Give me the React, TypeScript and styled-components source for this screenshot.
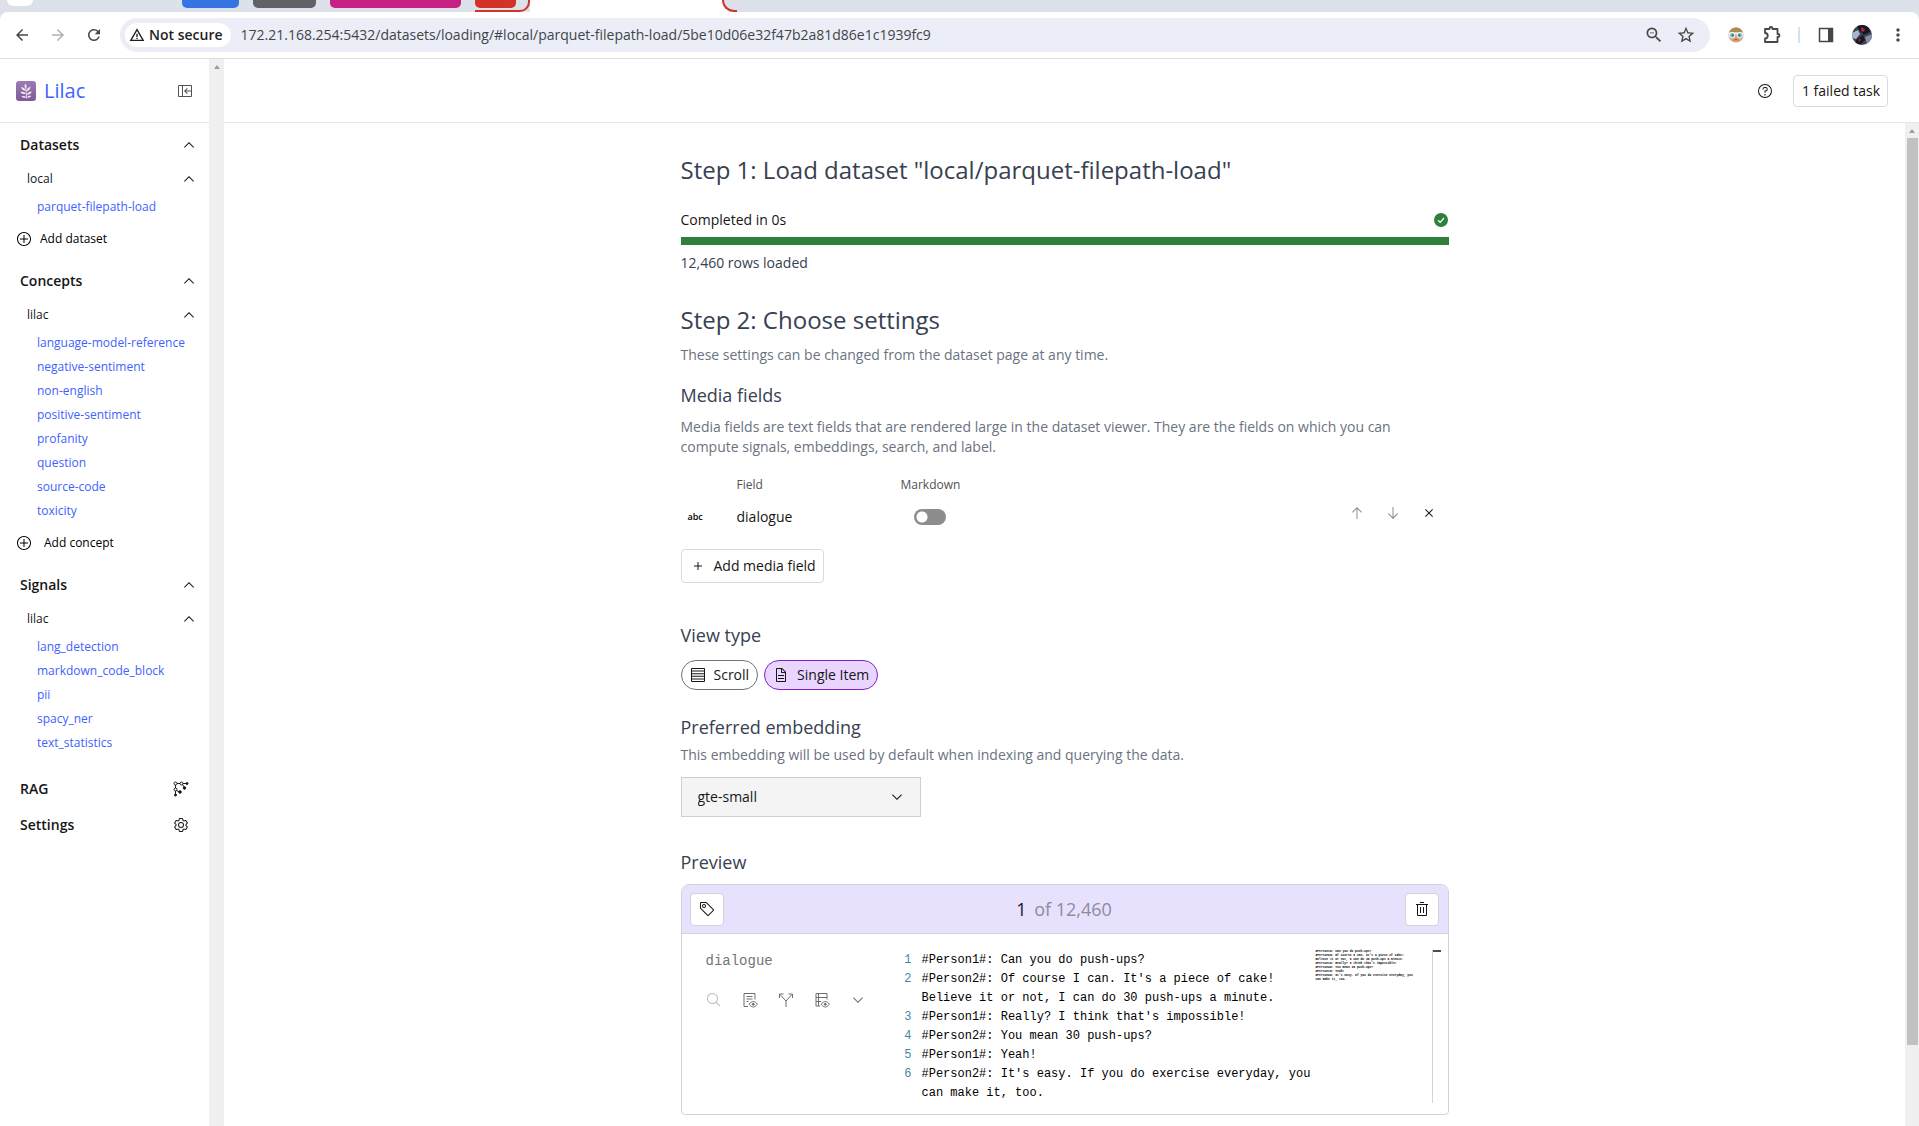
import React from "react";
import styled, { createGlobalStyle } from "styled-components";
import {
  MdArrowBack,
  MdArrowForward,
  MdRefresh,
  MdWarningAmber,
  MdZoomOut,
  MdStarBorder,
  MdOutlineExtension,
  MdMoreVert,
} from "react-icons/md";

const SANS = `"Open Sans", "Noto Sans", sans-serif`;
const MONO = `"Liberation Mono", "DejaVu Sans Mono", monospace`;

const GlobalStyle = createGlobalStyle`
  *, *::before, *::after { box-sizing: border-box; }
  body { margin: 0; background: #fff; color: #161616; font-family: ${SANS}; font-size: 14px; line-height: 20px; overflow: hidden; }
  button, input, select { font: inherit; color: inherit; }
  button { background: none; border: 0; padding: 0; display: inline-flex; align-items: center; justify-content: center; cursor: pointer; }
  h1, h2, h3, p, ul, ol { margin: 0; padding: 0; font-weight: 400; list-style: none; }
  a { text-decoration: none; }
  svg { display: block; flex: none; }
`;

/* ---------- icons ---------- */

const PATHS = {
  chevronUp: "M16 10L26 20 24.6 21.4 16 12.8 7.4 21.4 6 20z",
  chevronDown: "M16 22L6 12 7.4 10.6 16 19.2 24.6 10.6 26 12z",
  addAlt:
    "M16 4c6.6 0 12 5.4 12 12s-5.4 12-12 12S4 22.6 4 16 9.4 4 16 4M16 2C8.3 2 2 8.3 2 16s6.3 14 14 14 14-6.3 14-14S23.7 2 16 2z M24 15L17 15 17 8 15 8 15 15 8 15 8 17 15 17 15 24 17 24 17 17 24 17z",
  add: "M17 15L17 8 15 8 15 15 8 15 8 17 15 17 15 24 17 24 17 17 24 17 24 15z",
  help: "M16,2A14,14,0,1,0,30,16,14,14,0,0,0,16,2Zm0,26A12,12,0,1,1,28,16,12,12,0,0,1,16,28Z M14.5 23.5a1.5 1.5 0 1 0 3 0a1.5 1.5 0 1 0 -3 0z M17,8H15.5A4.49,4.49,0,0,0,11,12.5V13h2v-.5A2.5,2.5,0,0,1,15.5,10H17a2.5,2.5,0,0,1,0,5H15v4.5h2V17a4.5,4.5,0,0,0,0-9Z",
  panelClose:
    "M28,4H4A2,2,0,0,0,2,6V26a2,2,0,0,0,2,2H28a2,2,0,0,0,2-2V6A2,2,0,0,0,28,4ZM10,26H4V6h6Zm18-11H17.8l3.6-3.6L20,10l-6,6,6,6,1.4-1.4L17.8,17H28v9H12V6H28Z",
  document:
    "M25.7,9.3l-7-7C18.5,2.1,18.3,2,18,2H8C6.9,2,6,2.9,6,4v24c0,1.1,0.9,2,2,2h16c1.1,0,2-0.9,2-2V10C26,9.7,25.9,9.5,25.7,9.3z M18,4.4l5.6,5.6H18V4.4z M24,28H8V4h8v6c0,1.1,0.9,2,2,2h6V28z M10 22H22V24H10z M10 16H22V18H10z",
  trash:
    "M12 12H14V24H12z M18 12H20V24H18z M4 6V8H6V28a2 2 0 0 0 2 2H24a2 2 0 0 0 2-2V8h2V6zM8 28V8H24V28z M12 2H20V4H12z",
  tag: "M10,14a4,4,0,1,1,4-4A4,4,0,0,1,10,14Zm0-6a2,2,0,1,0,2,2A2,2,0,0,0,10,8Z M16.6436,29.4141,2.5859,15.3555A2,2,0,0,1,2,13.9414V4A2,2,0,0,1,4,2h9.9414a2,2,0,0,1,1.4141.5859L29.4141,16.6436a2.0005,2.0005,0,0,1,0,2.8285l-9.9414,9.942a2.0008,2.0008,0,0,1-2.8285,0ZM4,4v9.9417L18.0579,28,28,18.0579,13.9416,4Z",
  search:
    "M29,27.5859l-7.5521-7.5521a11.0177,11.0177,0,1,0-1.4141,1.4141L27.5859,29ZM4,13a9,9,0,1,1,9,9A9.01,9.01,0,0,1,4,13Z",
  arrowUp:
    "M16 4L6 14 7.41 15.41 15 7.83 15 28 17 28 17 7.83 24.59 15.41 26 14z",
  arrowDown:
    "M16 28L6 18 7.41 16.59 15 24.17 15 4 17 4 17 24.17 24.59 16.59 26 18z",
  close:
    "M24 9.4L22.6 8 16 14.6 9.4 8 8 9.4 14.6 16 8 22.6 9.4 24 16 17.4 22.6 24 24 22.6 17.4 16z",
  gear: "M27,16.76c0-.25,0-.5,0-.76s0-.51,0-.77l1.92-1.68A2,2,0,0,0,29.3,11L26.94,7a2,2,0,0,0-1.73-1,2,2,0,0,0-.64.1l-2.43.82a11.35,11.35,0,0,0-1.31-.75l-.51-2.52a2,2,0,0,0-2-1.61H13.64a2,2,0,0,0-2,1.61l-.51,2.52a11.48,11.48,0,0,0-1.32.75L7.43,6.06A2,2,0,0,0,6.79,6,2,2,0,0,0,5.06,7L2.7,11a2,2,0,0,0,.41,2.51L5,15.24c0,.25,0,.5,0,.76s0,.51,0,.77L3.11,18.45A2,2,0,0,0,2.7,21L5.06,25a2,2,0,0,0,1.73,1,2,2,0,0,0,.64-.1l2.43-.82a11.35,11.35,0,0,0,1.31.75l.51,2.52a2,2,0,0,0,2,1.61h4.72a2,2,0,0,0,2-1.61l.51-2.52a11.48,11.48,0,0,0,1.32-.75l2.42.82a2,2,0,0,0,.64.1,2,2,0,0,0,1.73-1L29.3,21a2,2,0,0,0-.41-2.51ZM25.21,24l-3.43-1.16a8.86,8.86,0,0,1-2.71,1.57L18.36,28H13.64l-.71-3.55a9.36,9.36,0,0,1-2.7-1.57L6.79,24,4.43,20l2.72-2.4a8.9,8.9,0,0,1,0-3.13L4.43,12,6.79,8l3.43,1.16a8.86,8.86,0,0,1,2.71-1.57L13.64,4h4.72l.71,3.55a9.36,9.36,0,0,1,2.7,1.57L25.21,8,27.57,12l-2.72,2.4a8.9,8.9,0,0,1,0,3.13L27.57,20Z M16,22a6,6,0,1,1,6-6A5.94,5.94,0,0,1,16,22Zm0-10a3.91,3.91,0,0,0-4,4,3.91,3.91,0,0,0,4,4,3.91,3.91,0,0,0,4-4A3.91,3.91,0,0,0,16,12Z",
};

function Icon({ name, size = 16 }: { name: keyof typeof PATHS; size?: number }) {
  return (
    <svg width={size} height={size} viewBox="0 0 32 32" fill="currentColor" aria-hidden="true">
      <path d={PATHS[name]} />
    </svg>
  );
}

function LineIcon({ children }: { children: React.ReactNode }) {
  return (
    <svg width="16" height="16" viewBox="0 0 32 32" fill="none" stroke="currentColor" strokeWidth="2" aria-hidden="true">
      {children}
    </svg>
  );
}

const RowsIcon = () => (
  <LineIcon>
    <path d="M3 3H29V29H3zM4 8H28M4 13.500H28M4 18.500H28M4 24H28" />
  </LineIcon>
);

const GraphIcon = () => (
  <LineIcon>
    <circle cx="5" cy="5" r="3" />
    <circle cx="17" cy="5" r="3" />
    <circle cx="5" cy="17" r="3" />
    <path d="M8 5H14M20 5H26M5 8V14M5 20V26M19 7L23 13M7 19L13 22" />
    <g fill="currentColor">
      <circle cx="28" cy="5" r="2" />
      <circle cx="23" cy="14" r="2.500" />
      <circle cx="14" cy="22" r="2.500" />
      <circle cx="5" cy="28" r="2" />
    </g>
  </LineIcon>
);

const EyeMark = () => (
  <>
    <path d="M14.500 24.500C17 20.500 20 19 22.500 19S28 20.500 30.500 24.500C28 28.500 25 30 22.500 30S17 28.500 14.500 24.500z" />
    <circle cx="22.500" cy="24.500" r="2" fill="currentColor" />
  </>
);

const DocViewIcon = () => (
  <LineIcon>
    <path d="M12 29H4V3H26V15M9 9H21M9 14H21M9 19H13" />
    <EyeMark />
  </LineIcon>
);

const TableViewIcon = () => (
  <LineIcon>
    <path d="M12 28H4V3H26V15M4 11H26M4 19H14M9 3V28" />
    <EyeMark />
  </LineIcon>
);

const SplitIcon = () => (
  <LineIcon>
    <path d="M16 30V18L4 5M16 18L28 5M3 12V4H11M21 4H29V12" />
  </LineIcon>
);

const CheckIcon = () => (
  <svg width="16" height="16" viewBox="0 0 16 16" aria-hidden="true">
    <circle cx="8" cy="8" r="7" fill="#2f7f3d" />
    <path d="M5 8.300L7.200 10.400L11 6" fill="none" stroke="#fff" strokeWidth="1.200" />
  </svg>
);

const LilacLogo = () => (
  <svg width="20" height="20" viewBox="0 0 20 20" aria-hidden="true">
    <defs>
      <linearGradient id="lilacGrad" x1="0" y1="0" x2="0" y2="1">
        <stop offset="0" stopColor="#9c7bb4" />
        <stop offset="1" stopColor="#805b96" />
      </linearGradient>
    </defs>
    <rect width="20" height="20" rx="3" fill="url(#lilacGrad)" />
    <path d="M10.500 17.500L10 7" stroke="#e9dff0" strokeWidth="1" fill="none" />
    <g fill="#f1e9f6">
      <path d="M9.300 2.500C8 4.500 8.300 6.500 10 7.800C11 6 10.800 4 9.300 2.500z" />
      <path d="M5 6C5.400 8.300 7.200 9.600 9.800 9.800C9.200 7.600 7.700 6.300 5 6z" />
      <path d="M14.500 5.500C12.400 6.200 11 8 10.700 10.300C13 9.800 14.400 8.200 14.500 5.500z" />
      <path d="M4.500 11C5.500 12.800 7.300 13.400 9.800 12.800C8.800 11 7 10.400 4.500 11z" />
      <path d="M15.800 10.500C13.500 10.500 11.700 11.600 10.800 13.600C13 13.900 14.900 12.900 15.800 10.500z" />
      <path d="M5.500 15.500C7 17 8.600 17.200 10 16.300C9 15 7.500 14.700 5.500 15.500z" />
      <path d="M15.200 15C13.500 14.400 12 14.900 10.900 16.300C12.500 17 14.100 16.600 15.200 15z" />
    </g>
  </svg>
);

const FaceIcon = () => (
  <svg width="16" height="16" viewBox="0 0 16 16" aria-hidden="true">
    <circle cx="8" cy="8" r="7.500" fill="#dba27c" />
    <path d="M1 6C2 2 5 .5 8 .5S14 2 15 6L11 5L5 5z" fill="#a98d55" />
    <rect x="0.500" y="5.500" width="15" height="1.500" fill="#eef4f6" />
    <circle cx="4.200" cy="8.200" r="2.800" fill="#8fc4cd" stroke="#eef4f6" />
    <circle cx="11.800" cy="8.200" r="2.800" fill="#8fc4cd" stroke="#eef4f6" />
    <circle cx="4.600" cy="8.200" r="1.200" fill="#3c8491" />
    <circle cx="11.400" cy="8.200" r="1.200" fill="#3c8491" />
    <path d="M6 13.500C7 12 9 12 10 13.500" stroke="#b5573c" fill="none" />
  </svg>
);

const PuzzleIcon = () => (
  <svg width="20" height="20" viewBox="0 0 20 20" aria-hidden="true">
    <path
      d="M3 4H7.500V3.500A1.500 1.500 0 0 1 10.500 3.500V4H15.500V9H16A1.500 1.500 0 0 1 16 12H15.500V17H3V13.500A2.500 2.500 0 0 0 3 8z"
      fill="none"
      stroke="#474747"
      strokeWidth="1.800"
      strokeLinejoin="round"
    />
  </svg>
);

const SidePanelIcon = () => (
  <svg width="16" height="16" viewBox="0 0 16 16" aria-hidden="true">
    <rect x="1.500" y="1.500" width="13" height="13" fill="none" stroke="#474747" strokeWidth="1.500" />
    <rect x="10" y="1" width="5" height="14" fill="#474747" />
  </svg>
);

const AvatarIcon = () => (
  <svg width="20" height="20" viewBox="0 0 20 20" aria-hidden="true">
    <defs>
      <clipPath id="avatarClip">
        <circle cx="10" cy="10" r="10" />
      </clipPath>
    </defs>
    <g clipPath="url(#avatarClip)">
      <rect width="20" height="20" fill="#3d4457" />
      <path d="M0 8L6 5L8 9L4 14L0 13z" fill="#a9b6c9" />
      <path d="M13 12L20 9V16L15 19z" fill="#8590a6" />
      <path d="M4 0H16L18 7L12 10L8 6z" fill="#15161f" />
      <path d="M9 2L13 4L12 7L9 6z" fill="#a3293a" />
      <path d="M5 14L11 10L13 15L8 20L3 18z" fill="#171821" />
      <path d="M6 15L8 13L9 15L7 17z" fill="#8c2636" />
    </g>
  </svg>
);

/* ---------- browser chrome ---------- */

const Page = styled.div`
  display: flex;
  flex-direction: column;
  height: 100vh;
`;

const TabStrip = styled.div`
  display: flex;
  align-items: flex-start;
  flex: none;
  height: 12px;
  padding-left: 7px;
  background: #dde1e9;
  overflow: hidden;
`;

const TabBlob = styled.div`
  width: 26px;
  height: 6px;
  margin-right: 149px;
  border-radius: 0 0 10px 10px;
  background: #fff;
`;

const TabGroup = styled.div<{ $color: string; $width: number }>`
  width: ${(p) => p.$width}px;
  height: 8px;
  margin-right: 14px;
  border-radius: 0 0 5px 5px;
  background: ${(p) => p.$color};
`;

const RedGroup = styled.div`
  width: 55px;
  height: 12px;
  padding-right: 12px;
  border: solid #d33228;
  border-width: 0 2px 2px 0;
  border-radius: 0 0 10px 0;
  background: #dde1e9;
`;

const RedPill = styled.div`
  height: 8px;
  border-radius: 0 0 5px 5px;
  background: #d33228;
`;

const ActiveTab = styled.div`
  display: flex;
  width: 207px;
  height: 12px;
  background: #fff;
`;

const ActiveTabEdge = styled.div`
  width: 15px;
  height: 12px;
  margin-left: auto;
  border: solid #d33228;
  border-width: 0 0 2px 2px;
  border-radius: 0 0 0 12px;
  background: #dde1e9;
`;

const Toolbar = styled.header`
  flex: none;
  background: #dde1e9;
`;

const ToolbarInner = styled.div`
  display: flex;
  align-items: center;
  height: 47px;
  padding: 0 11px 0 12px;
  border-bottom: 1px solid #dcdee1;
  border-radius: 8px 8px 0 0;
  background: #fff;
  color: #474747;
`;

const NavButtons = styled.div`
  display: flex;
  gap: 16px;
  margin-right: 16px;
`;

const ChromeButton = styled.button<{ $dim?: boolean }>`
  width: 20px;
  height: 20px;
  color: ${(p) => (p.$dim ? "#b0b0b0" : "#474747")};
`;

const UrlBar = styled.div`
  display: flex;
  align-items: center;
  flex: 1;
  height: 34px;
  padding: 0 14px 0 5px;
  border-radius: 17px;
  background: #ebeef7;
`;

const SecurityChip = styled.button`
  height: 24px;
  padding: 0 8px 0 4px;
  gap: 4px;
  border-radius: 12px;
  background: #fff;
  color: #1f1f1f;
  font-size: 14px;
  font-weight: 600;
  white-space: nowrap;
`;

const UrlInput = styled.input`
  flex: 1;
  min-width: 0;
  margin-left: 10px;
  padding: 0;
  border: 0;
  background: none;
  outline: none;
  color: #424448;
  font-size: 14px;
`;

const UrlActions = styled.div`
  display: flex;
  gap: 12px;
`;

const Extensions = styled.div`
  display: flex;
  align-items: center;
  gap: 16px;
  margin-left: 16px;
`;

const ExtDivider = styled.span`
  width: 2px;
  height: 16px;
  background: #d3e0fb;
`;

/* ---------- app shell ---------- */

const Shell = styled.div`
  display: flex;
  flex: 1;
  min-height: 0;
`;

const Sidebar = styled.nav`
  flex: none;
  width: 209px;
`;

const BrandRow = styled.div`
  display: flex;
  align-items: center;
  height: 64px;
  padding: 0 16px;
  border-bottom: 1px solid #e5e7eb;
`;

const Brand = styled.a`
  display: flex;
  align-items: center;
  gap: 8px;
  color: #4062fe;
  font-size: 20px;
  line-height: 28px;
`;

const CollapseButton = styled.button`
  margin-left: auto;
  color: #525252;
`;

const NavSections = styled.div`
  padding-top: 4px;
`;

const NavSection = styled.section`
  padding-bottom: 4px;
`;

const SectionHead = styled.button`
  width: 100%;
  height: 36px;
  padding: 0 12px 0 20px;
  justify-content: space-between;
  font-weight: 600;
`;

const GroupHead = styled.button`
  width: 100%;
  height: 32px;
  padding: 0 12px 0 27px;
  justify-content: space-between;
  font-size: 12px;
`;

const NavLink = styled.a`
  display: flex;
  align-items: center;
  height: 24px;
  padding-left: 37px;
  color: #4062fe;
  font-size: 12px;
  white-space: nowrap;
`;

const AddButton = styled.button<{ $gap: number }>`
  height: 40px;
  padding-left: 16px;
  gap: ${(p) => p.$gap}px;
  font-size: 12px;
  color: #000;
`;

const PlainLinks = styled.div`
  padding-top: 12px;
`;

const PlainLink = styled.a`
  display: flex;
  align-items: center;
  justify-content: space-between;
  height: 36px;
  padding: 0 20px;
  color: #161616;
  font-weight: 600;
`;

const ScrollTrack = styled.div<{ $width: number }>`
  display: flex;
  flex: none;
  flex-direction: column;
  align-items: center;
  width: ${(p) => p.$width}px;
  padding-top: 6px;
  background: #f0f0f0;
`;

const ScrollArrow = styled.span`
  width: 0;
  border: solid transparent;
  border-width: 0 3px 4px;
  border-bottom-color: #9c9c9c;
`;

const ScrollThumb = styled.span`
  width: 11px;
  height: 91%;
  margin-top: 5px;
  background: #c1c1c1;
`;

const Content = styled.div`
  display: flex;
  flex: 1;
  flex-direction: column;
  min-width: 0;
`;

const TopBar = styled.div`
  display: flex;
  flex: none;
  align-items: center;
  justify-content: flex-end;
  gap: 20px;
  height: 64px;
  padding-right: 31px;
  border-bottom: 1px solid #e5e7eb;
`;

const OutlineButton = styled.button<{ $height: number; $gap?: number }>`
  height: ${(p) => p.$height}px;
  padding: 0 7px 0 8px;
  gap: ${(p) => p.$gap ?? 0}px;
  border: 1px solid #d8dadf;
  border-radius: 4px;
  background: #fff;
  white-space: nowrap;
`;

const ScrollArea = styled.div`
  display: flex;
  flex: 1;
  min-height: 0;
`;

const Main = styled.main`
  flex: 1;
  min-width: 0;
  overflow: hidden;
`;

const Column = styled.div`
  width: 100%;
  max-width: 768px;
  margin: 0 auto;
  padding: 31px 0 10px;
`;

/* ---------- dataset loading ---------- */

const StepTitle = styled.h1`
  color: #374151;
  font-size: 24px;
  line-height: 32px;
`;

const FieldTitle = styled.h3`
  color: #374151;
  font-size: 18px;
  line-height: 28px;
`;

const Hint = styled.p`
  color: #6b7280;
`;

const Progress = styled.section`
  padding: 24px 0 31px;
`;

const ProgressHead = styled.div`
  display: flex;
  align-items: center;
  justify-content: space-between;
`;

const ProgressBar = styled.div`
  height: 8px;
  margin: 7px 0 8px;
  background: #2f7f3d;
`;

const ProgressNote = styled.p`
  color: #374151;
`;

const Setting = styled.section<{ $top: number; $gap: number }>`
  display: flex;
  flex-direction: column;
  align-items: stretch;
  gap: ${(p) => p.$gap}px;
  margin-top: ${(p) => p.$top}px;
`;

const MediaGrid = styled.div`
  display: grid;
  grid-template-columns: 49px 164px 74px 1fr;
  align-items: center;
  row-gap: 8px;
  margin: 12px 0 8px;
  padding-left: 7px;
`;

const ColumnLabel = styled.span`
  color: #525252;
  font-size: 12px;
  line-height: 16px;
`;

const SwitchLabel = styled.label`
  grid-column: 3 / 5;
  color: #525252;
  font-size: 12px;
  line-height: 16px;
`;

const FieldLabel = styled(ColumnLabel)`
  grid-column: 2;
`;

const TypeBadge = styled.span`
  color: #000;
  font-size: 9px;
  line-height: 32px;
  font-weight: 600;
`;

const FieldName = styled.span`
  line-height: 32px;
`;

const Switch = styled.input`
  appearance: none;
  width: 32px;
  height: 16px;
  margin: 0 0 0 13px;
  border-radius: 8px;
  background: radial-gradient(circle at 8px 8px, #fff 5px, #8d8d8d 6px);
`;

const RowActions = styled.div`
  display: flex;
  align-self: start;
  justify-content: flex-end;
  gap: 12px;
  padding-right: 8px;
`;

const RowAction = styled.button<{ $dim?: boolean }>`
  width: 24px;
  height: 24px;
  color: ${(p) => (p.$dim ? "#8d8d8d" : "#161616")};
`;

const PillRow = styled.div`
  display: flex;
  gap: 6px;
`;

const Pill = styled.button<{ $on?: boolean }>`
  height: 30px;
  padding: 0 8px;
  gap: 8px;
  border: 1px solid ${(p) => (p.$on ? "#7e22ce" : "#6b7280")};
  border-radius: 15px;
  background: ${(p) => (p.$on ? "#e9d5ff" : "#fff")};
`;

const EmbeddingHead = styled.div`
  display: grid;
  gap: 4px;
`;

const SelectBox = styled.div`
  display: grid;
  align-items: center;
  width: 240px;

  > * { grid-area: 1 / 1; }
  > svg { justify-self: end; margin-right: 16px; pointer-events: none; }
`;

const Select = styled.select`
  appearance: none;
  width: 100%;
  height: 40px;
  padding: 0 40px 0 16px;
  border: 1px solid #cdcfd3;
  border-radius: 0;
  background: #f4f4f4;
`;

const Card = styled.div`
  border: 1px solid #d1d3d8;
  border-radius: 8px 8px 4px 4px;
  overflow: hidden;
`;

const CardHead = styled.div`
  display: flex;
  align-items: center;
  justify-content: space-between;
  height: 49px;
  padding: 0 9px 0 8px;
  border-bottom: 1px solid #d1d3d8;
  background: #e7e1fe;
`;

const Counter = styled.p`
  color: #8b8c9c;
  font-size: 18px;
  line-height: 28px;

  > b { margin-right: 3px; color: #161616; font-weight: 400; }
`;

const SquareButton = styled.button`
  width: 34px;
  height: 33px;
  border: 1px solid #d1d3d8;
  border-radius: 4px;
  background: #fff;
`;

const CardBody = styled.div`
  display: flex;
  padding: 16px 7px 11px 24px;
`;

const FieldPanel = styled.div`
  width: 192px;
  padding-top: 1px;
  color: #757575;
  font-family: ${MONO};
`;

const FieldTools = styled.div`
  display: flex;
  gap: 12px;
  margin-top: 17px;
  margin-left: -4px;
`;

const ToolButton = styled.button<{ $faint?: boolean }>`
  width: 24px;
  height: 24px;
  color: ${(p) => (p.$faint ? "#bdbdbd" : "#6f6f6f")};
`;

const CodeLines = styled.ol`
  flex: 1;
  min-width: 0;
  padding-top: 1px;
  font-family: ${MONO};
  font-size: 12px;
  line-height: 19px;
  color: #000;
`;

const CodeLine = styled.li`
  display: grid;
  grid-template-columns: 14px 1fr;
  column-gap: 10px;
`;

const LineNumber = styled.span`
  color: #3f87a1;
  text-align: right;
`;

const Minimap = styled.div`
  flex: none;
  width: 117px;
  font-family: ${MONO};
  font-size: 3px;
  font-weight: 700;
  line-height: 4px;
  color: #000;
  border-right: 1px solid #d4d4d4;
  white-space: pre;
`;

const RulerMark = styled.span`
  width: 8px;
  height: 2px;
  background: #4d4d4d;
`;

const CONCEPTS = [
  "language-model-reference",
  "negative-sentiment",
  "non-english",
  "positive-sentiment",
  "profanity",
  "question",
  "source-code",
  "toxicity",
];

const SIGNALS = ["lang_detection", "markdown_code_block", "pii", "spacy_ner", "text_statistics"];

const DIALOGUE = [
  "#Person1#: Can you do push-ups?",
  "#Person2#: Of course I can. It's a piece of cake! Believe it or not, I can do 30 push-ups a minute.",
  "#Person1#: Really? I think that's impossible!",
  "#Person2#: You mean 30 push-ups?",
  "#Person1#: Yeah!",
  "#Person2#: It's easy. If you do exercise everyday, you can make it, too.",
];

const MINIMAP = DIALOGUE.join("\n")
  .replace("cake! Believe", "cake!\nBelieve")
  .replace("you can make", "you\ncan make");

function SidebarSection(props: {
  title: string;
  group: string;
  items: string[];
  children?: React.ReactNode;
}) {
  return (
    <NavSection>
      <SectionHead>
        {props.title}
        <Icon name="chevronUp" />
      </SectionHead>
      <GroupHead>
        {props.group}
        <Icon name="chevronUp" />
      </GroupHead>
      {props.items.map((item) => (
        <NavLink key={item} href={`#${item}`}>
          {item}
        </NavLink>
      ))}
      {props.children}
    </NavSection>
  );
}

function BrowserChrome() {
  return (
    <>
      <TabStrip>
        <TabBlob />
        <TabGroup $color="#3574e3" $width={57} />
        <TabGroup $color="#5f6368" $width={63} />
        <TabGroup $color="#c81f83" $width={131} />
        <RedGroup>
          <RedPill />
        </RedGroup>
        <ActiveTab>
          <ActiveTabEdge />
        </ActiveTab>
      </TabStrip>
      <Toolbar>
        <ToolbarInner>
          <NavButtons>
            <ChromeButton aria-label="Back">
              <MdArrowBack size={18} />
            </ChromeButton>
            <ChromeButton aria-label="Forward" $dim>
              <MdArrowForward size={18} />
            </ChromeButton>
            <ChromeButton aria-label="Reload">
              <MdRefresh size={18} />
            </ChromeButton>
          </NavButtons>
          <UrlBar>
            <SecurityChip>
              <MdWarningAmber size={16} />
              Not secure
            </SecurityChip>
            <UrlInput
              aria-label="Address"
              defaultValue="172.21.168.254:5432/datasets/loading/#local/parquet-filepath-load/5be10d06e32f47b2a81d86e1c1939fc9"
            />
            <UrlActions>
              <ChromeButton aria-label="Zoom">
                <MdZoomOut size={20} />
              </ChromeButton>
              <ChromeButton aria-label="Bookmark">
                <MdStarBorder size={20} />
              </ChromeButton>
            </UrlActions>
          </UrlBar>
          <Extensions>
            <ChromeButton aria-label="Extension">
              <FaceIcon />
            </ChromeButton>
            <ChromeButton aria-label="Extensions">
              <PuzzleIcon />
            </ChromeButton>
            <ExtDivider />
            <ChromeButton aria-label="Side panel">
              <SidePanelIcon />
            </ChromeButton>
            <ChromeButton aria-label="Profile">
              <AvatarIcon />
            </ChromeButton>
            <ChromeButton aria-label="Menu">
              <MdMoreVert size={20} />
            </ChromeButton>
          </Extensions>
        </ToolbarInner>
      </Toolbar>
    </>
  );
}

function AppSidebar() {
  return (
    <Sidebar>
      <BrandRow>
        <Brand href="#home">
          <LilacLogo />
          Lilac
        </Brand>
        <CollapseButton aria-label="Close sidebar">
          <Icon name="panelClose" />
        </CollapseButton>
      </BrandRow>
      <NavSections>
        <SidebarSection title="Datasets" group="local" items={["parquet-filepath-load"]}>
          <AddButton $gap={8}>
            <Icon name="addAlt" />
            Add dataset
          </AddButton>
        </SidebarSection>
        <SidebarSection title="Concepts" group="lilac" items={CONCEPTS}>
          <AddButton $gap={12}>
            <Icon name="addAlt" />
            Add concept
          </AddButton>
        </SidebarSection>
        <SidebarSection title="Signals" group="lilac" items={SIGNALS} />
        <PlainLinks>
          <PlainLink href="#rag">
            RAG
            <GraphIcon />
          </PlainLink>
          <PlainLink href="#settings">
            Settings
            <Icon name="gear" />
          </PlainLink>
        </PlainLinks>
      </NavSections>
    </Sidebar>
  );
}

function MediaFields() {
  return (
    <Setting $top={16} $gap={8}>
      <FieldTitle>Media fields</FieldTitle>
      <Hint>
        Media fields are text fields that are rendered large in the dataset viewer. They are the
        fields on which you can compute signals, embeddings, search, and label.
      </Hint>
      <MediaGrid>
        <FieldLabel>Field</FieldLabel>
        <SwitchLabel htmlFor="markdown">Markdown</SwitchLabel>
        <TypeBadge>abc</TypeBadge>
        <FieldName>dialogue</FieldName>
        <Switch type="checkbox" role="switch" id="markdown" />
        <RowActions>
          <RowAction aria-label="Move up" $dim>
            <Icon name="arrowUp" />
          </RowAction>
          <RowAction aria-label="Move down" $dim>
            <Icon name="arrowDown" />
          </RowAction>
          <RowAction aria-label="Remove">
            <Icon name="close" />
          </RowAction>
        </RowActions>
      </MediaGrid>
      <div>
        <OutlineButton $height={34} $gap={8}>
          <Icon name="add" />
          Add media field
        </OutlineButton>
      </div>
    </Setting>
  );
}

function Preview() {
  return (
    <Setting $top={31} $gap={8}>
      <FieldTitle>Preview</FieldTitle>
      <Card>
        <CardHead>
          <SquareButton aria-label="Add label">
            <Icon name="tag" />
          </SquareButton>
          <Counter>
            <b>1</b> of 12,460
          </Counter>
          <SquareButton aria-label="Delete row">
            <Icon name="trash" />
          </SquareButton>
        </CardHead>
        <CardBody>
          <FieldPanel>
            dialogue
            <FieldTools>
              <ToolButton aria-label="Search" $faint>
                <Icon name="search" />
              </ToolButton>
              <ToolButton aria-label="View document">
                <DocViewIcon />
              </ToolButton>
              <ToolButton aria-label="Compare">
                <SplitIcon />
              </ToolButton>
              <ToolButton aria-label="View table">
                <TableViewIcon />
              </ToolButton>
              <ToolButton aria-label="More">
                <Icon name="chevronDown" />
              </ToolButton>
            </FieldTools>
          </FieldPanel>
          <CodeLines>
            {DIALOGUE.map((line, i) => (
              <CodeLine key={i}>
                <LineNumber>{i + 1}</LineNumber>
                <span>{line}</span>
              </CodeLine>
            ))}
          </CodeLines>
          <Minimap aria-hidden="true">{MINIMAP}</Minimap>
          <RulerMark />
        </CardBody>
      </Card>
    </Setting>
  );
}

export default function App() {
  return (
    <Page>
      <GlobalStyle />
      <BrowserChrome />
      <Shell>
        <AppSidebar />
        <ScrollTrack $width={15}>
          <ScrollArrow />
        </ScrollTrack>
        <Content>
          <TopBar>
            <button aria-label="Help">
              <Icon name="help" />
            </button>
            <OutlineButton $height={32}>1 failed task</OutlineButton>
          </TopBar>
          <ScrollArea>
            <Main>
              <Column>
                <StepTitle>Step 1: Load dataset "local/parquet-filepath-load"</StepTitle>
                <Progress>
                  <ProgressHead>
                    Completed in 0s
                    <CheckIcon />
                  </ProgressHead>
                  <ProgressBar />
                  <ProgressNote>12,460 rows loaded</ProgressNote>
                </Progress>
                <Setting $top={0} $gap={9}>
                  <StepTitle as="h2">Step 2: Choose settings</StepTitle>
                  <Hint>These settings can be changed from the dataset page at any time.</Hint>
                </Setting>
                <MediaFields />
                <Setting $top={38} $gap={11}>
                  <FieldTitle>View type</FieldTitle>
                  <PillRow>
                    <Pill>
                      <RowsIcon />
                      Scroll
                    </Pill>
                    <Pill $on>
                      <Icon name="document" />
                      Single Item
                    </Pill>
                  </PillRow>
                </Setting>
                <Setting $top={23} $gap={12}>
                  <EmbeddingHead>
                    <FieldTitle>
                      <label htmlFor="embedding">Preferred embedding</label>
                    </FieldTitle>
                    <Hint>
                      This embedding will be used by default when indexing and querying the data.
                    </Hint>
                  </EmbeddingHead>
                  <SelectBox>
                    <Select id="embedding" defaultValue="gte-small">
                      <option>gte-small</option>
                    </Select>
                    <Icon name="chevronDown" />
                  </SelectBox>
                </Setting>
                <Preview />
              </Column>
            </Main>
            <ScrollTrack $width={14}>
              <ScrollArrow />
              <ScrollThumb />
            </ScrollTrack>
          </ScrollArea>
        </Content>
      </Shell>
    </Page>
  );
}
